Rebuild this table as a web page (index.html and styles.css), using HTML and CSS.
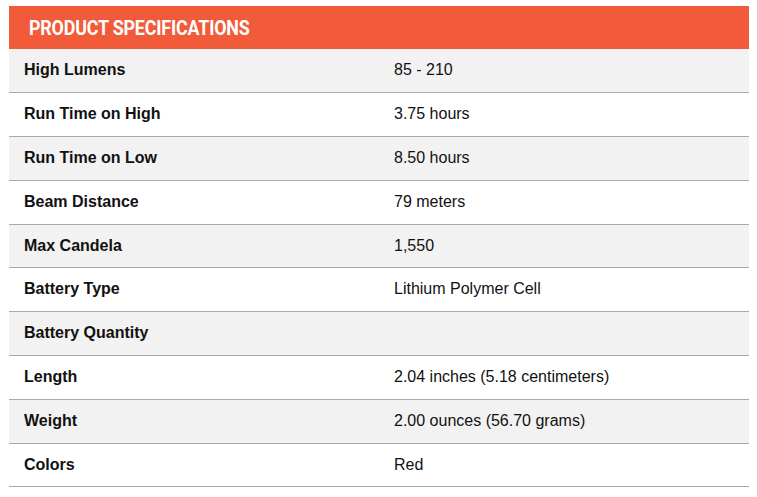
FILE: index.html
```html
<!DOCTYPE html>
<html>
<head>
<meta charset="utf-8">
<link rel="stylesheet" href="styles.css">
</head>
<body>
<div class="specs">
  <div class="specs-head"><h2 class="specs-title">PRODUCT SPECIFICATIONS</h2></div>
  <table class="specs-table">
    <tr><th>High Lumens</th><td>85 - 210</td></tr>
    <tr><th>Run Time on High</th><td>3.75 hours</td></tr>
    <tr><th>Run Time on Low</th><td>8.50 hours</td></tr>
    <tr><th>Beam Distance</th><td>79 meters</td></tr>
    <tr><th>Max Candela</th><td>1,550</td></tr>
    <tr><th>Battery Type</th><td>Lithium Polymer Cell</td></tr>
    <tr><th>Battery Quantity</th><td></td></tr>
    <tr><th>Length</th><td>2.04 inches (5.18 centimeters)</td></tr>
    <tr><th>Weight</th><td>2.00 ounces (56.70 grams)</td></tr>
    <tr><th>Colors</th><td>Red</td></tr>
  </table>
</div>
</body>
</html>
```
FILE: styles.css
```css
html, body { margin: 0; padding: 0; background: #fff; }
body { padding: 6px 8px 0 9px; font-family: "Liberation Sans", Arial, sans-serif; }
.specs { width: 740px; }
.specs-head {
  background: #f15b3a;
  height: 43px;
  display: flex;
  align-items: center;
  padding-left: 20px;
}
.specs-title {
  margin: 0;
  color: #fff;
  font-family: Roboto, sans-serif;
  font-weight: 700;
  font-size: 21px;
  letter-spacing: -0.2px;
  transform: scaleX(0.85);
  transform-origin: left center;
  white-space: nowrap;
}
.specs-table {
  width: 100%;
  border-collapse: collapse;
  table-layout: fixed;
}
.specs-table tr { height: 43.8px; border-bottom: 1px solid #a9a9a9; }
.specs-table tr:nth-child(odd) { background: #f2f2f2; }
.specs-table th, .specs-table td {
  padding: 0 15px 1px;
  text-align: left;
  font-size: 16px;
  color: #111;
  vertical-align: middle;
}
.specs-table th { font-weight: 700; width: 340px; }
.specs-table td { font-weight: 400; }
```
